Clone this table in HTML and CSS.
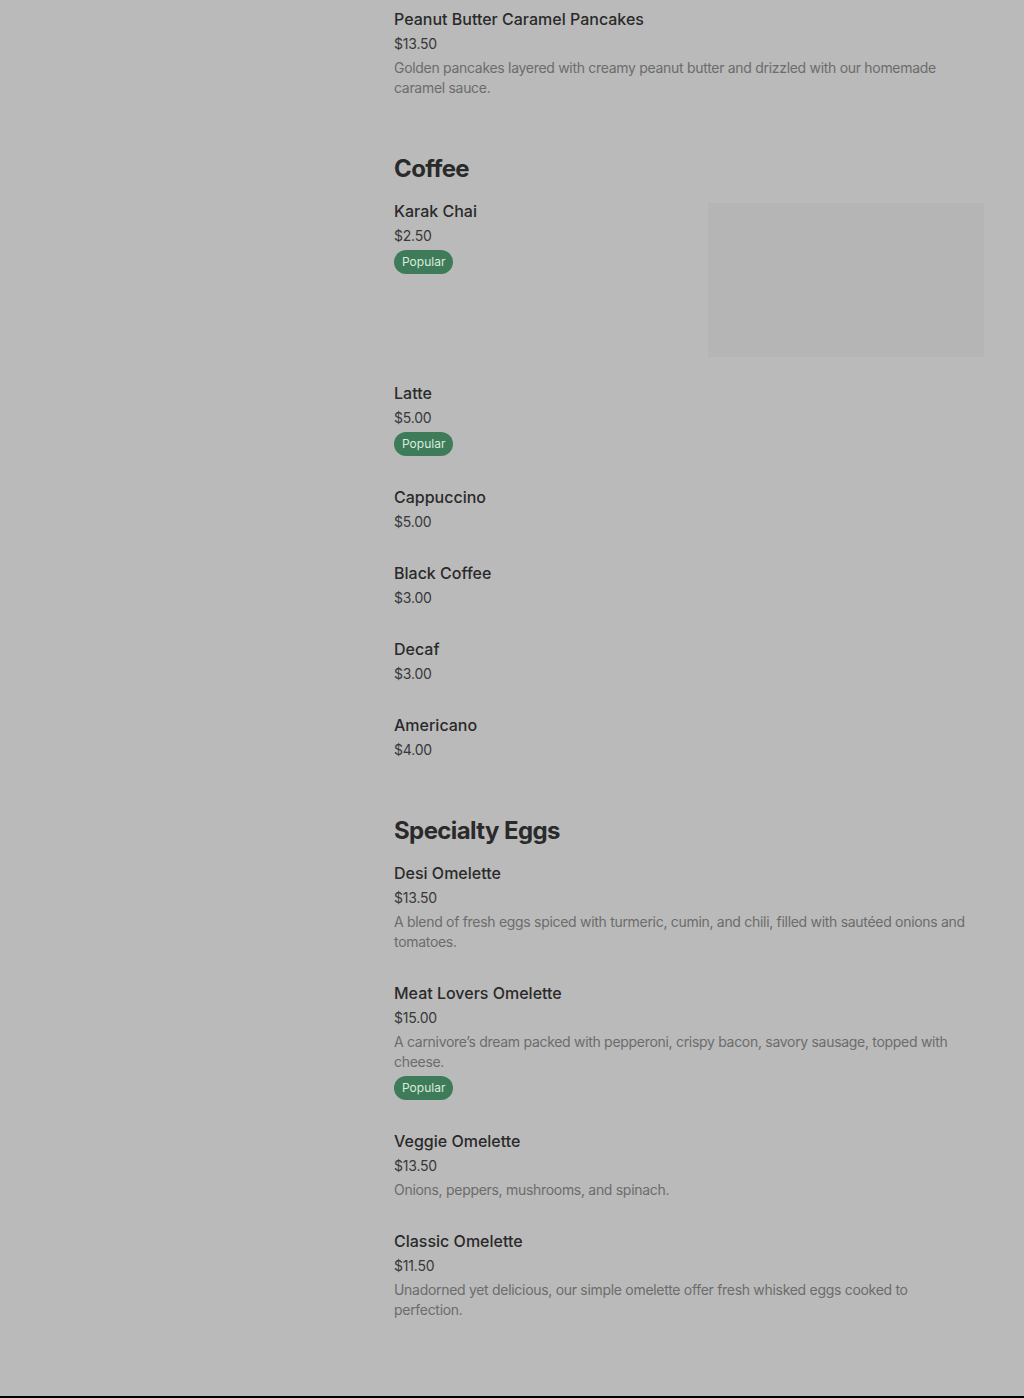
FILE: index.html
```html
<!DOCTYPE html>
<html lang="en">

<head>
    <meta charset="UTF-8">
    <meta name="viewport" content="width=device-width, initial-scale=1.0">
    <title>Menu</title>
    <link rel="stylesheet" href="styles.css">
</head>

<body>
    <div class="page">
        <main class="menu">
            <!-- tail of the previous section -->
            <section class="menu-section">
                <div class="item">
                    <div class="item-info">
                        <div class="item-title">Peanut Butter Caramel Pancakes</div>
                        <div class="item-price">$13.50</div>
                        <div class="item-desc">Golden pancakes layered with creamy peanut butter and drizzled with our homemade caramel sauce.</div>
                    </div>
                </div>
            </section>

            <section class="menu-section">
                <h2>Coffee</h2>
                <div class="item">
                    <div class="item-info">
                        <div class="item-title">Karak Chai</div>
                        <div class="item-price">$2.50</div>
                        <span class="badge">Popular</span>
                    </div>
                    <div class="item-photo"></div>
                </div>
                <div class="item">
                    <div class="item-info">
                        <div class="item-title">Latte</div>
                        <div class="item-price">$5.00</div>
                        <span class="badge">Popular</span>
                    </div>
                </div>
                <div class="item">
                    <div class="item-info">
                        <div class="item-title">Cappuccino</div>
                        <div class="item-price">$5.00</div>
                    </div>
                </div>
                <div class="item">
                    <div class="item-info">
                        <div class="item-title">Black Coffee</div>
                        <div class="item-price">$3.00</div>
                    </div>
                </div>
                <div class="item">
                    <div class="item-info">
                        <div class="item-title">Decaf</div>
                        <div class="item-price">$3.00</div>
                    </div>
                </div>
                <div class="item">
                    <div class="item-info">
                        <div class="item-title">Americano</div>
                        <div class="item-price">$4.00</div>
                    </div>
                </div>
            </section>

            <section class="menu-section">
                <h2>Specialty Eggs</h2>
                <div class="item">
                    <div class="item-info">
                        <div class="item-title">Desi Omelette</div>
                        <div class="item-price">$13.50</div>
                        <div class="item-desc">A blend of fresh eggs spiced with turmeric, cumin, and chili, filled with sautéed onions and tomatoes.</div>
                    </div>
                </div>
                <div class="item">
                    <div class="item-info">
                        <div class="item-title">Meat Lovers Omelette</div>
                        <div class="item-price">$15.00</div>
                        <div class="item-desc">A carnivore’s dream packed with pepperoni, crispy bacon, savory sausage, topped with cheese.</div>
                        <span class="badge">Popular</span>
                    </div>
                </div>
                <div class="item">
                    <div class="item-info">
                        <div class="item-title">Veggie Omelette</div>
                        <div class="item-price">$13.50</div>
                        <div class="item-desc">Onions, peppers, mushrooms, and spinach.</div>
                    </div>
                </div>
                <div class="item">
                    <div class="item-info">
                        <div class="item-title">Classic Omelette</div>
                        <div class="item-price">$11.50</div>
                        <div class="item-desc">Unadorned yet delicious, our simple omelette offer fresh whisked eggs cooked to perfection.</div>
                    </div>
                </div>
            </section>
        </main>
    </div>

    <footer class="footer"></footer>
</body>

</html>
```

FILE: styles.css
```css
:root {
    --bg-color: #bababa;
    --title-color: #2a2a2a;
    --price-color: #383838;
    --desc-color: #6c6c6c;
    --badge-bg: #3e7c59;
    --badge-text: #dcebdf;
    --photo-bg: #b5b5b5;
}

body {
    margin: 0;
    padding: 0;
    font-family: 'Inter', 'Roboto', sans-serif;
    background-color: var(--bg-color);
    color: var(--title-color);
}

.page {
    padding: 7px 40px 21px 394px;
}

.menu {
    width: 590px;
}

/* padding, not margin: the last item's margin must not collapse into it */
.menu-section {
    padding-bottom: 26px;
}

.menu-section h2 {
    margin: 0 0 14px;
    font-size: 24px;
    line-height: 32px;
    font-weight: 700;
    letter-spacing: -0.6px;
    color: var(--title-color);
}

.item {
    display: flex;
    justify-content: space-between;
    margin-bottom: 24px;
}

.item-info {
    display: flex;
    flex-direction: column;
    align-items: flex-start;
    padding-bottom: 5px;
}

.item-title {
    font-size: 16px;
    line-height: 24px;
    font-weight: 500;
    color: var(--title-color);
}

.item-price {
    margin-top: 3px;
    font-size: 14px;
    line-height: 20px;
    color: var(--price-color);
    letter-spacing: -0.2px;
}

.item-desc {
    max-width: 580px;
    margin-top: 4px;
    font-size: 14px;
    line-height: 20px;
    color: var(--desc-color);
    letter-spacing: -0.3px;
}

.badge {
    margin-top: 4px;
    height: 24px;
    line-height: 24px;
    padding: 0 8px;
    border-radius: 12px;
    background-color: var(--badge-bg);
    color: var(--badge-text);
    font-size: 12px;
}

.item-photo {
    width: 276px;
    height: 154px;
    margin-top: 4px;
    background-color: var(--photo-bg);
}

.footer {
    height: 120px;
    background-color: #000;
}
```
